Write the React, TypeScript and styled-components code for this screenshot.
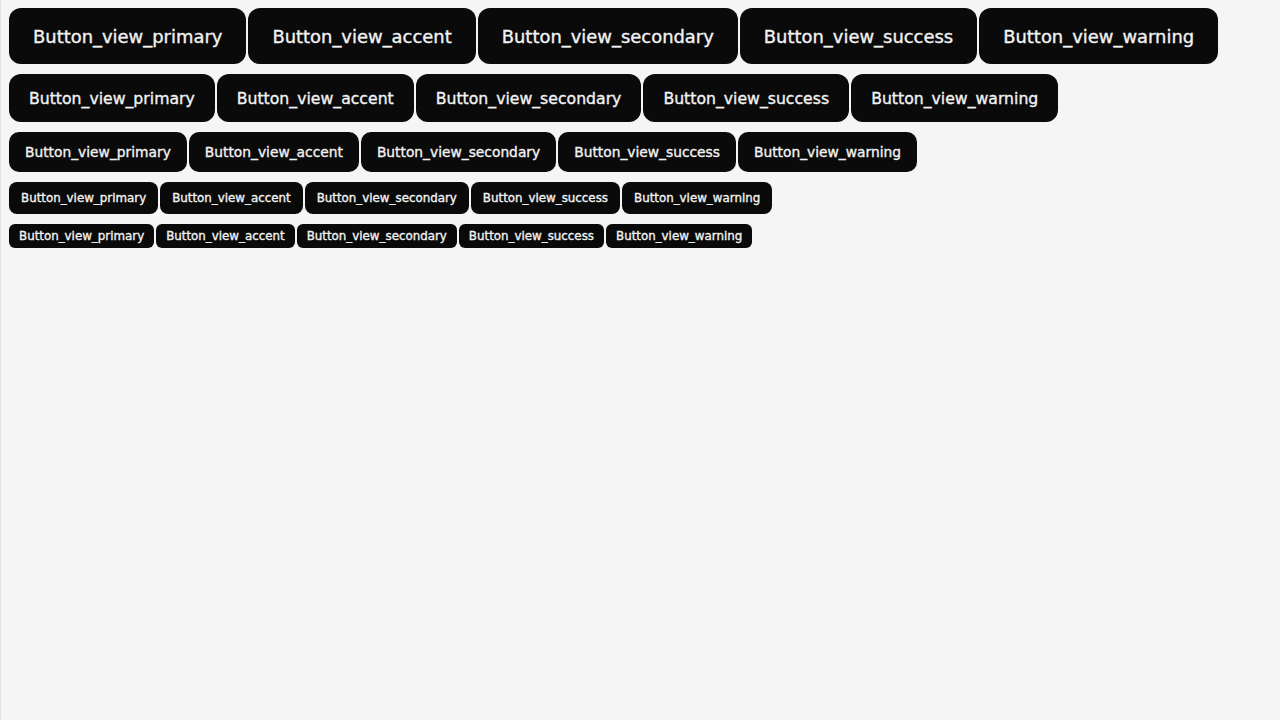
import React from "react";
import styled, { createGlobalStyle } from "styled-components";

const Global = createGlobalStyle`
  html, body { margin: 0; padding: 0; background: #f5f5f5; }
  body { font-family: "DejaVu Sans", sans-serif; }
`;

const Page = styled.div`
  min-height: 720px;
  box-sizing: border-box;
  border-left: 1px solid #e2e2e2;
  padding: 8px 8px;
  display: flex;
  flex-direction: column;
  gap: 10px;
`;

const Row = styled.div`
  display: flex;
  gap: 2px;
`;

type Size = "xl" | "l" | "m" | "s" | "xs";

const sizes: Record<Size, { h: number; fs: number; px: number; r: number }> = {
  xl: { h: 56, fs: 17.93, px: 24, r: 12 },
  l: { h: 48, fs: 15.7, px: 20, r: 12 },
  m: { h: 40, fs: 13.8, px: 16, r: 10 },
  s: { h: 32, fs: 11.85, px: 12, r: 8 },
  xs: { h: 24, fs: 11.85, px: 10, r: 6 },
};

const Button = styled.button<{ $size: Size }>`
  box-sizing: border-box;
  height: ${(p) => sizes[p.$size].h}px;
  padding: 0 ${(p) => sizes[p.$size].px}px;
  border: none;
  border-radius: ${(p) => sizes[p.$size].r}px;
  background: #0a0a0a;
  color: #f2f2f2;
  font-family: "DejaVu Sans", sans-serif;
  font-size: ${(p) => sizes[p.$size].fs}px;
  font-weight: 400;
  -webkit-text-stroke: 0.35px #f2f2f2;
  white-space: nowrap;
  cursor: pointer;
`;

const views = ["primary", "accent", "secondary", "success", "warning"];
const rows: Size[] = ["xl", "l", "m", "s", "xs"];

export default function App() {
  return (
    <>
      <Global />
      <Page>
        {rows.map((s) => (
          <Row key={s}>
            {views.map((v) => (
              <Button key={v} $size={s}>
                Button_view_{v}
              </Button>
            ))}
          </Row>
        ))}
      </Page>
    </>
  );
}
